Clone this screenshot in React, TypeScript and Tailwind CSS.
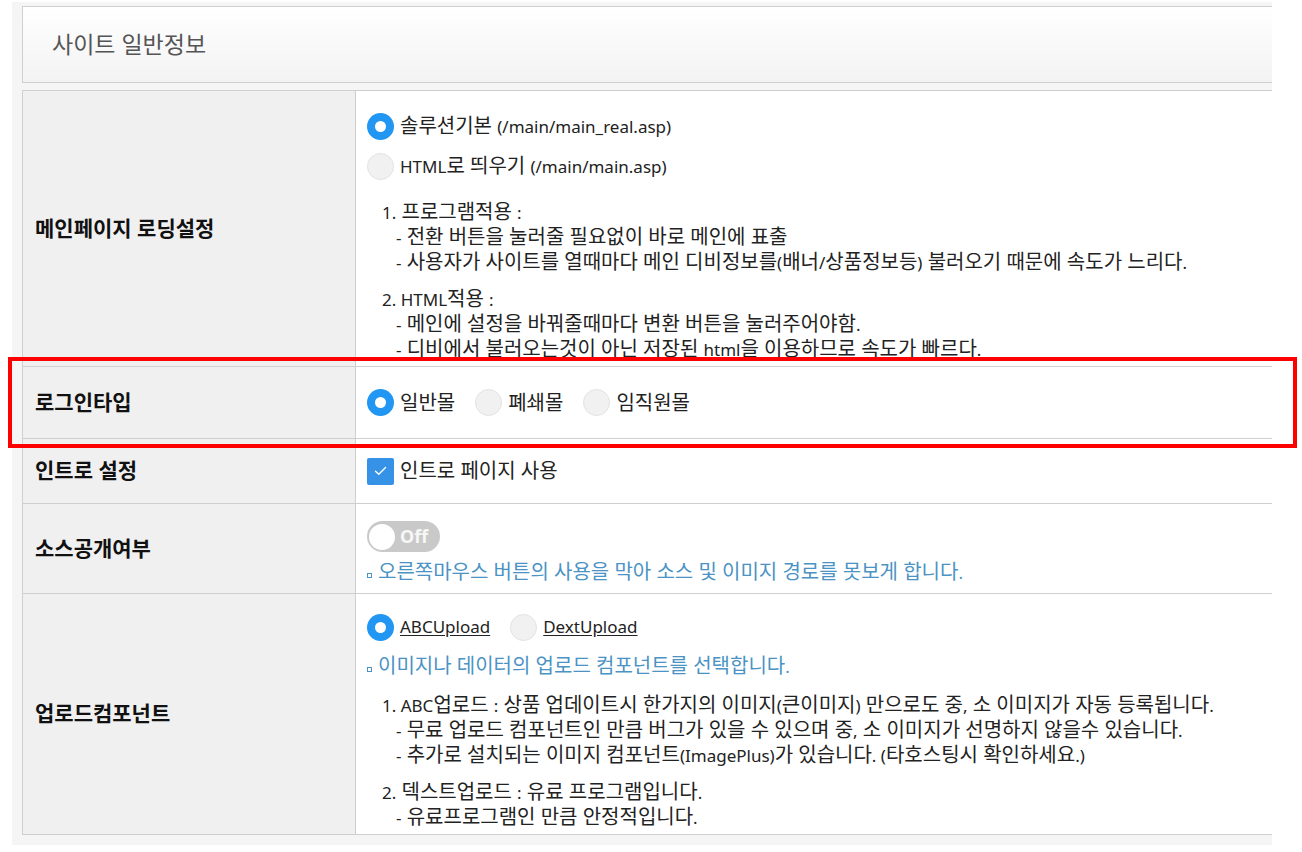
import React from 'react'

const font = "font-['Noto_Sans','Noto_Sans_CJK_KR',sans-serif]"

// hangul glyphs in the reference are drawn larger than the latin ones
function K({ t }: { t: string }) {
  return (
    <>
      {t.split(/([가-힣 ]+)/).map((p, i) =>
        /[가-힣]/.test(p) ? (
          <span key={i} className="text-[20px]">
            {p}
          </span>
        ) : (
          p
        ),
      )}
    </>
  )
}

function Radio({ on = false }: { on?: boolean }) {
  if (on) {
    return (
      <span className="flex h-[27px] w-[27px] shrink-0 items-center justify-center rounded-full bg-[#2196f3]">
        <span className="h-[11px] w-[11px] rounded-full bg-white" />
      </span>
    )
  }
  return <span className="h-[27px] w-[27px] shrink-0 rounded-full border border-[#e2e2e2] bg-[#f1f1f1]" />
}

function Option({ on, label, link }: { on?: boolean; label: string; link?: boolean }) {
  return (
    <label className="mr-[20px] flex items-center">
      <Radio on={on} />
      <span className={`ml-[6px] text-[17px] text-[#222] ${link ? 'underline underline-offset-2' : ''}`}>
        <K t={label} />
      </span>
    </label>
  )
}

function Note({ text }: { text: string }) {
  return (
    <div className="flex h-[23px] items-center text-[17px] leading-[23px] text-[#4a93c4]">
      <span className="mr-[6px] mt-[7px] h-[5px] w-[5px] border border-[#4a93c4]" />
      <span>
        <K t={text} />
      </span>
    </div>
  )
}

function Desc({ lines }: { lines: string[][] }) {
  return (
    <div className="pl-[15px] text-[17px] leading-[24px] text-[#222]">
      {lines.map((block, i) => (
        <div key={i} className={i > 0 ? 'mt-[12px]' : ''}>
          {block.map((line, j) => (
            <div key={j} className={j > 0 ? 'pl-[14px]' : ''}>
              <K t={line} />
            </div>
          ))}
        </div>
      ))}
    </div>
  )
}

function Row({ label, height, children, center }: { label: string; height: string; children: React.ReactNode; center?: boolean }) {
  return (
    <div className={`flex border-b border-[#cfcfcf] ${height}`}>
      <div className="flex w-[333px] shrink-0 items-center border-r border-[#cfcfcf] bg-[#f0f0f0] pl-[12px] text-[21px] font-bold text-[#111]">
        {label}
      </div>
      <div className={`flex-1 bg-white pl-[11px] ${center ? 'flex items-center' : ''}`}>{children}</div>
    </div>
  )
}

export default function App() {
  return (
    <div className={`relative min-h-[852px] w-[1302px] bg-white pt-[2px] ${font}`}>
      <div className="ml-[12px] w-[1260px] overflow-hidden bg-[#f5f5f5] pb-[10px] pl-[10px] pt-[4px]">
        <div className="flex h-[77px] items-center border-y border-l border-[#cfcfcf] bg-gradient-to-b from-white to-[#f3f3f3] pl-[29px]">
          <h2 className="text-[23px] text-[#555]">사이트 일반정보</h2>
        </div>

        <div className="mt-[7px] border-l border-t border-[#cfcfcf]">
          <Row label="메인페이지 로딩설정" height="h-[276px]">
            <div className="pt-[15px]">
              <div className="flex h-[40px] items-center">
                <Option on label="솔루션기본 (/main/main_real.asp)" />
              </div>
              <div className="flex h-[40px] items-center">
                <Option label="HTML로 띄우기 (/main/main.asp)" />
              </div>
              <div className="mt-[14px]">
                <Desc
                  lines={[
                    [
                      '1. 프로그램적용 :',
                      '- 전환 버튼을 눌러줄 필요없이 바로 메인에 표출',
                      '- 사용자가 사이트를 열때마다 메인 디비정보를(배너/상품정보등) 불러오기 때문에 속도가 느리다.',
                    ],
                    [
                      '2. HTML적용 :',
                      '- 메인에 설정을 바꿔줄때마다 변환 버튼을 눌러주어야함.',
                      '- 디비에서 불러오는것이 아닌 저장된 html을 이용하므로 속도가 빠르다.',
                    ],
                  ]}
                />
              </div>
            </div>
          </Row>

          <Row label="로그인타입" height="h-[72px]" center>
            <Option on label="일반몰" />
            <Option label="폐쇄몰" />
            <Option label="임직원몰" />
          </Row>

          <Row label="인트로 설정" height="h-[65px]" center>
            <span className="flex h-[27px] w-[27px] items-center justify-center rounded-[2px] bg-[#3592e6]">
              <svg width="13" height="10" viewBox="0 0 13 10" fill="none">
                <path d="M1.5 5.2 4.8 8.3 11.5 1.5" stroke="white" strokeWidth="1.4" strokeLinecap="round" strokeLinejoin="round" />
              </svg>
            </span>
            <span className="ml-[6px] text-[17px] text-[#222]">
              <K t="인트로 페이지 사용" />
            </span>
          </Row>

          <Row label="소스공개여부" height="h-[90px]">
            <div className="pt-[17px]">
              <div className="flex h-[31px] w-[73px] items-center rounded-full bg-[#c9c9c9] pl-[2px]">
                <span className="h-[26px] w-[26px] rounded-full bg-white" />
                <span className="ml-[5px] text-[18px] font-bold text-[#f7f7f7]">Off</span>
              </div>
              <div className="mt-[8px]">
                <Note text="오른쪽마우스 버튼의 사용을 막아 소스 및 이미지 경로를 못보게 합니다." />
              </div>
            </div>
          </Row>

          <Row label="업로드컴포넌트" height="h-[241px]">
            <div className="pt-[13px]">
              <div className="flex h-[40px] items-center">
                <Option on link label="ABCUpload" />
                <Option link label="DextUpload" />
              </div>
              <div className="mt-[7px]">
                <Note text="이미지나 데이터의 업로드 컴포넌트를 선택합니다." />
              </div>
              <div className="mt-[16px]">
                <Desc
                  lines={[
                    [
                      '1. ABC업로드 : 상품 업데이트시 한가지의 이미지(큰이미지) 만으로도 중, 소 이미지가 자동 등록됩니다.',
                      '- 무료 업로드 컴포넌트인 만큼 버그가 있을 수 있으며 중, 소 이미지가 선명하지 않을수 있습니다.',
                      '- 추가로 설치되는 이미지 컴포넌트(ImagePlus)가 있습니다. (타호스팅시 확인하세요.)',
                    ],
                    ['2. 덱스트업로드 : 유료 프로그램입니다.', '- 유료프로그램인 만큼 안정적입니다.'],
                  ]}
                />
              </div>
            </div>
          </Row>
        </div>
      </div>

      <div className="pointer-events-none absolute left-[8px] top-[357px] h-[91px] w-[1289px] border-4 border-[#ff0000]" />
    </div>
  )
}
